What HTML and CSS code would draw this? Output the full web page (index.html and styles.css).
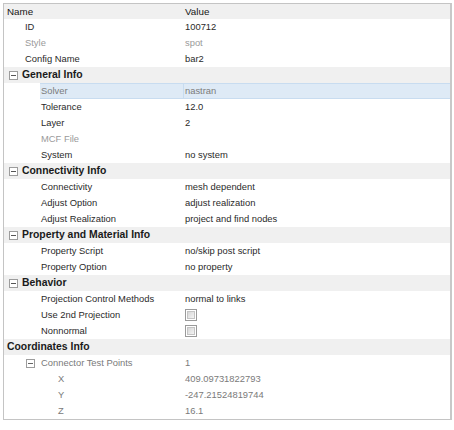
FILE: index.html
```html
<!DOCTYPE html>
<html>
<head>
<meta charset="utf-8">
<link rel="stylesheet" href="styles.css">
</head>
<body>
<div class="grid">
  <div class="row header"><div class="name l0">Name</div><div class="value">Value</div></div>
  <div class="row"><div class="name l1">ID</div><div class="value">100712</div></div>
  <div class="row dim"><div class="name l1">Style</div><div class="value">spot</div></div>
  <div class="row"><div class="name l1">Config Name</div><div class="value">bar2</div></div>
  <div class="row group"><div class="name lg"><svg class="exp" width="9" height="9" viewBox="0 0 9 9"><rect x="0.5" y="0.5" width="8" height="8" fill="#fff" stroke="#9c9c9c"/><line x1="2" y1="4.5" x2="7" y2="4.5" stroke="#555"/></svg>General Info</div><div class="value"></div></div>
  <div class="row selected"><div class="name">Solver</div><div class="value">nastran</div></div>
  <div class="row"><div class="name l2">Tolerance</div><div class="value">12.0</div></div>
  <div class="row"><div class="name l2">Layer</div><div class="value">2</div></div>
  <div class="row dim"><div class="name l2">MCF File</div><div class="value"></div></div>
  <div class="row"><div class="name l2">System</div><div class="value">no system</div></div>
  <div class="row group"><div class="name lg"><svg class="exp" width="9" height="9" viewBox="0 0 9 9"><rect x="0.5" y="0.5" width="8" height="8" fill="#fff" stroke="#9c9c9c"/><line x1="2" y1="4.5" x2="7" y2="4.5" stroke="#555"/></svg>Connectivity Info</div><div class="value"></div></div>
  <div class="row"><div class="name l2">Connectivity</div><div class="value">mesh dependent</div></div>
  <div class="row"><div class="name l2">Adjust Option</div><div class="value">adjust realization</div></div>
  <div class="row"><div class="name l2">Adjust Realization</div><div class="value">project and find nodes</div></div>
  <div class="row group"><div class="name lg"><svg class="exp" width="9" height="9" viewBox="0 0 9 9"><rect x="0.5" y="0.5" width="8" height="8" fill="#fff" stroke="#9c9c9c"/><line x1="2" y1="4.5" x2="7" y2="4.5" stroke="#555"/></svg>Property and Material Info</div><div class="value"></div></div>
  <div class="row"><div class="name l2">Property Script</div><div class="value">no/skip post script</div></div>
  <div class="row"><div class="name l2">Property Option</div><div class="value">no property</div></div>
  <div class="row group"><div class="name lg"><svg class="exp" width="9" height="9" viewBox="0 0 9 9"><rect x="0.5" y="0.5" width="8" height="8" fill="#fff" stroke="#9c9c9c"/><line x1="2" y1="4.5" x2="7" y2="4.5" stroke="#555"/></svg>Behavior</div><div class="value"></div></div>
  <div class="row"><div class="name l2">Projection Control Methods</div><div class="value">normal to links</div></div>
  <div class="row"><div class="name l2">Use 2nd Projection</div><div class="value"><svg class="chk" width="12" height="12" viewBox="0 0 12 12"><defs><linearGradient id="g" x1="0" y1="0" x2="1" y2="1"><stop offset="0" stop-color="#d4d4d4"/><stop offset="1" stop-color="#f6f6f6"/></linearGradient></defs><rect x="0.5" y="0.5" width="11" height="11" fill="#fff" stroke="#9a9a9a"/><rect x="2.5" y="2.5" width="7" height="7" fill="url(#g)" stroke="#c4c4c4"/></svg></div></div>
  <div class="row"><div class="name l2">Nonnormal</div><div class="value"><svg class="chk" width="12" height="12" viewBox="0 0 12 12"><rect x="0.5" y="0.5" width="11" height="11" fill="#fff" stroke="#9a9a9a"/><rect x="2.5" y="2.5" width="7" height="7" fill="url(#g)" stroke="#c4c4c4"/></svg></div></div>
  <div class="row group"><div class="name lg0">Coordinates Info</div><div class="value"></div></div>
  <div class="row soft"><div class="name l2e"><svg class="exp" width="9" height="9" viewBox="0 0 9 9"><rect x="0.5" y="0.5" width="8" height="8" fill="#fff" stroke="#9c9c9c"/><line x1="2" y1="4.5" x2="7" y2="4.5" stroke="#666"/></svg>Connector Test Points</div><div class="value">1</div></div>
  <div class="row soft"><div class="name l3">X</div><div class="value">409.09731822793</div></div>
  <div class="row soft"><div class="name l3">Y</div><div class="value">-247.21524819744</div></div>
  <div class="row soft"><div class="name l3">Z</div><div class="value">16.1</div></div>
</div>
</body>
</html>
```
FILE: styles.css
```css
html, body {
  margin: 0;
  padding: 0;
  background: #fff;
}
body {
  font-family: "Liberation Sans", Arial, sans-serif;
  font-size: 9.4px;
  color: #2a2a2a;
}
.grid {
  margin: 3px 0 0 3px;
  width: 446px;
  border: 1px solid #c4c4c4;
  border-right: 2px solid #c8c8c8;
  display: flex;
  flex-direction: column;
}
.row {
  display: flex;
  height: 16px;
  line-height: 16px;
  white-space: nowrap;
}
.name {
  width: 179px;
  box-sizing: border-box;
  display: flex;
  align-items: center;
}
.value {
  flex: 1;
  padding-left: 1px;
  border-left: 1px solid transparent;
  display: flex;
  align-items: center;
}
.header {
  background: #f0f0f0;
  color: #161616;
  height: 15px;
  font-size: 9.8px;
}
.l0 { padding-left: 3px; }
.l1 { padding-left: 21px; }
.l2 { padding-left: 37px; }
.l3 { padding-left: 54px; }
.lg { padding-left: 5px; }
.lg0 { padding-left: 3px; }
.l2e { padding-left: 22px; }
.exp {
  flex: none;
  margin-right: 4px;
}
.l2e .exp { margin-right: 6px; }
.group {
  background: #f0f0f0;
  font-weight: bold;
  font-size: 10.4px;
  color: #1a1a1a;
}
.dim { color: #9a9a9a; }
.soft { color: #7a7a7a; }
.selected .name {
  margin-left: 36px;
  width: 143px;
  padding-left: 1px;
}
.selected .name,
.selected .value {
  background: #deeaf6;
  border-top: 1px solid #c8dcf0;
  border-bottom: 1px solid #c8dcf0;
  color: #7c7c7c;
}
.selected .value {
  border-left: 1px solid #c8dcf0;
}
.chk {
  flex: none;
}
```
